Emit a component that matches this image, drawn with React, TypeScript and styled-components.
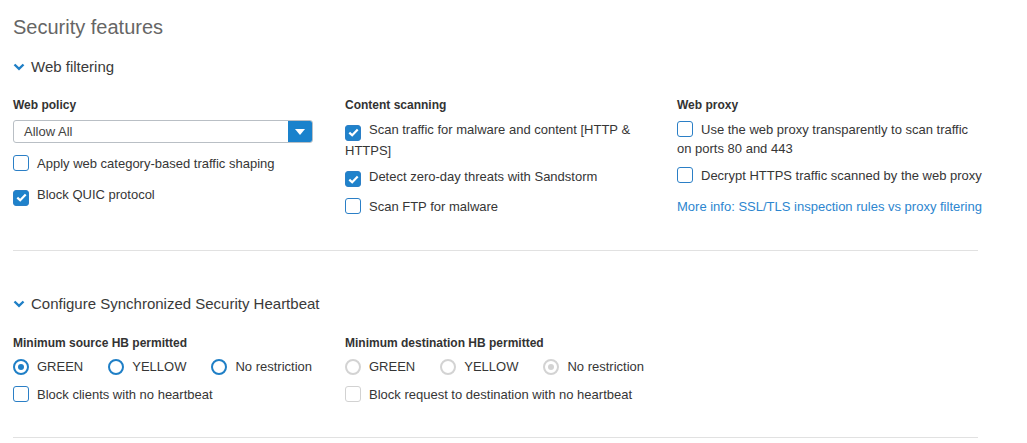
import React from 'react';
import styled, { createGlobalStyle } from 'styled-components';

const GlobalStyle = createGlobalStyle`
  body {
    margin: 0;
    background: #fff;
    font-family: "Liberation Sans", Arial, sans-serif;
    color: #363636;
  }
`

const Page = styled.div`
  padding: 15px 0 0 13px;
  width: 965px;
`

const Title = styled.div`
  font-size: 20px;
  line-height: 24px;
  color: #666;
`

const SectionHeader = styled.div<{ $top: number }>`
  display: flex;
  align-items: center;
  gap: 6px;
  margin-top: ${p => p.$top}px;
  font-size: 15px;
  line-height: 20px;
  color: #3a3a3a;
`

const Columns = styled.div<{ $top: number }>`
  display: grid;
  grid-template-columns: 310px 310px 307px;
  column-gap: 22px;
  margin-top: ${p => p.$top}px;
`

const Column = styled.div`
  display: flex;
  flex-direction: column;
`

const Label = styled.div`
  font-size: 12px;
  line-height: 16px;
  font-weight: bold;
  color: #333;
`

const Select = styled.div`
  display: flex;
  width: 300px;
  height: 23px;
  margin-top: 7px;
  box-sizing: border-box;
  border: 1px solid #b9bfc5;
  border-radius: 3px;
  overflow: hidden;
`

const SelectValue = styled.div`
  flex: 1;
  padding-left: 10px;
  font-size: 13px;
  line-height: 21px;
  color: #444;
`

const SelectButton = styled.div`
  width: 24px;
  background: #1a82cc;
  display: flex;
  align-items: center;
  justify-content: center;
`

const Row = styled.div<{ $top: number }>`
  margin-top: ${p => p.$top}px;
  font-size: 13px;
  line-height: 19px;
`

const Box = styled.span<{ $checked?: boolean; $disabled?: boolean }>`
  display: inline-flex;
  align-items: center;
  justify-content: center;
  vertical-align: -3px;
  width: 16px;
  height: 16px;
  box-sizing: border-box;
  margin-right: 8px;
  border-radius: 3px;
  border: 1.5px solid ${p => (p.$disabled ? '#d2d2d2' : '#2b7fc6')};
  background: ${p => (p.$checked ? '#1f82cb' : '#fff')};
`

const RadioGroup = styled.div`
  display: flex;
  gap: 25px;
  margin-top: 6px;
  font-size: 13px;
  line-height: 19px;
`

const RadioItem = styled.span`
  display: inline-flex;
  align-items: center;
`

const RadioCircle = styled.span<{ $checked?: boolean; $disabled?: boolean }>`
  display: inline-flex;
  align-items: center;
  justify-content: center;
  width: 16px;
  height: 16px;
  box-sizing: border-box;
  margin-right: 8px;
  border-radius: 50%;
  border: 2px solid ${p => (p.$disabled ? '#d3d3d3' : '#1f7fc6')};

  &::after {
    content: '';
    display: ${p => (p.$checked ? 'block' : 'none')};
    width: 6px;
    height: 6px;
    border-radius: 50%;
    background: ${p => (p.$disabled ? '#d3d3d3' : '#1f7fc6')};
  }
`

const Link = styled.a`
  display: block;
  margin-top: 12px;
  font-size: 13px;
  line-height: 19px;
  color: #2d86cf;
  text-decoration: none;
`

const Divider = styled.div<{ $top: number }>`
  margin-top: ${p => p.$top}px;
  height: 1px;
  background: #e1e1e1;
`

const Chevron = () => (
  <svg width="12" height="8" viewBox="0 0 12 8">
    <polyline points="1.5,1.5 6,5.8 10.5,1.5" fill="none" stroke="#1f7fc6" strokeWidth="2.4" />
  </svg>
)

const Caret = () => (
  <svg width="10" height="6" viewBox="0 0 10 6">
    <polygon points="0,0 10,0 5,6" fill="#fff" />
  </svg>
)

const Check = () => (
  <svg width="11" height="9" viewBox="0 0 11 9">
    <polyline points="1.3,4.6 4.2,7.3 9.7,1.6" fill="none" stroke="#fff" strokeWidth="2.2" />
  </svg>
)

const CheckRow: React.FC<{ checked?: boolean; disabled?: boolean; top: number; children: React.ReactNode }> = ({ checked, disabled, top, children }) => (
  <Row $top={top}>
    <Box $checked={checked} $disabled={disabled}>{checked && <Check />}</Box>
    {children}
  </Row>
)

const Radios: React.FC<{ selected: string; disabled?: boolean }> = ({ selected, disabled }) => (
  <RadioGroup>
    {['GREEN', 'YELLOW', 'No restriction'].map(o => (
      <RadioItem key={o}>
        <RadioCircle $checked={o === selected} $disabled={disabled} />
        {o}
      </RadioItem>
    ))}
  </RadioGroup>
)

export default function App() {
  return (
    <Page>
      <GlobalStyle />
      <Title>Security features</Title>

      <SectionHeader $top={18}><Chevron />Web filtering</SectionHeader>
      <Columns $top={20}>
        <Column>
          <Label>Web policy</Label>
          <Select>
            <SelectValue>Allow All</SelectValue>
            <SelectButton><Caret /></SelectButton>
          </Select>
          <CheckRow top={11}>Apply web category-based traffic shaping</CheckRow>
          <CheckRow top={12} checked>Block QUIC protocol</CheckRow>
        </Column>
        <Column>
          <Label>Content scanning</Label>
          <CheckRow top={7} checked>Scan traffic for malware and content [HTTP &amp; HTTPS]</CheckRow>
          <CheckRow top={7} checked>Detect zero-day threats with Sandstorm</CheckRow>
          <CheckRow top={10}>Scan FTP for malware</CheckRow>
        </Column>
        <Column>
          <Label>Web proxy</Label>
          <CheckRow top={7}>Use the web proxy transparently to scan traffic on ports 80 and 443</CheckRow>
          <CheckRow top={8}>Decrypt HTTPS traffic scanned by the web proxy</CheckRow>
          <Link href="#">More info: SSL/TLS inspection rules vs proxy filtering</Link>
        </Column>
      </Columns>
      <Divider $top={34} />

      <SectionHeader $top={43}><Chevron />Configure Synchronized Security Heartbeat</SectionHeader>
      <Columns $top={21}>
        <Column>
          <Label>Minimum source HB permitted</Label>
          <Radios selected="GREEN" />
          <CheckRow top={9}>Block clients with no heartbeat</CheckRow>
        </Column>
        <Column>
          <Label>Minimum destination HB permitted</Label>
          <Radios selected="No restriction" disabled />
          <CheckRow top={9} disabled>Block request to destination with no heartbeat</CheckRow>
        </Column>
      </Columns>
      <Divider $top={33} />
    </Page>
  )
}
